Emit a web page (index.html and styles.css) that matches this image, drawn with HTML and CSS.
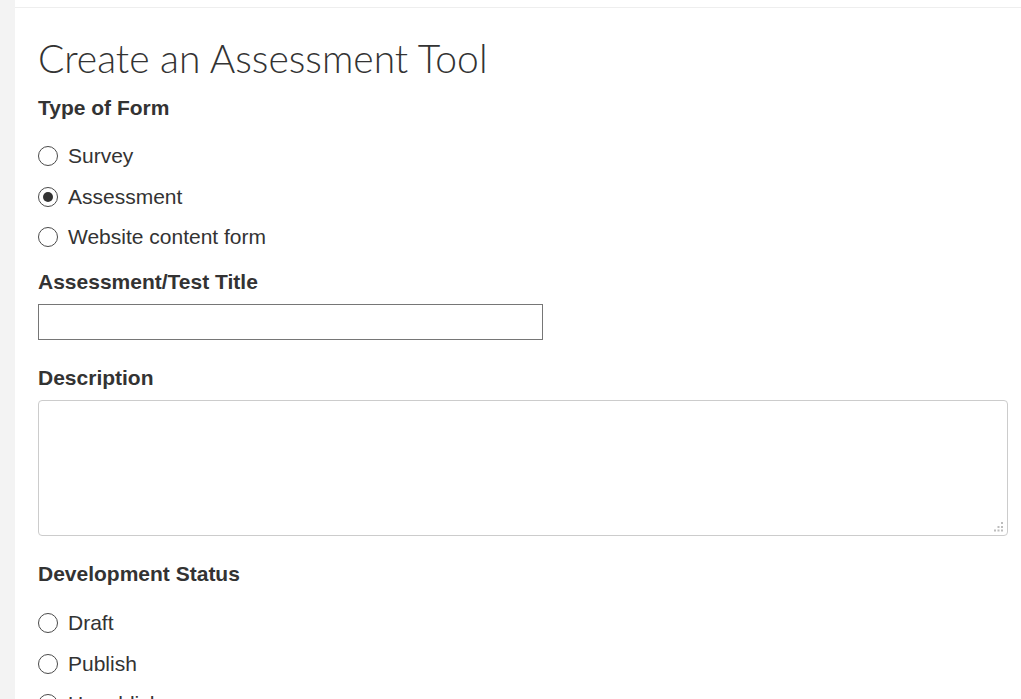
FILE: index.html
```html
<!DOCTYPE html>
<html>
<head>
<meta charset="utf-8">
<link rel="stylesheet" href="styles.css">
</head>
<body>
<div class="page">
  <aside class="gutter"></aside>
  <main class="panel">
    <h1 class="title">Create an Assessment Tool</h1>
    <div class="label label-first">Type of Form</div>
    <div class="radios">
      <label class="radio"><input type="radio" name="t"><span>Survey</span></label>
      <label class="radio"><input type="radio" name="t" checked><span>Assessment</span></label>
      <label class="radio"><input type="radio" name="t"><span>Website content form</span></label>
    </div>
    <div class="label label-title">Assessment/Test Title</div>
    <input class="text-input" type="text">
    <div class="label label-desc">Description</div>
    <div class="textarea-wrap">
      <textarea class="textarea"></textarea>
      <svg class="grip" width="11" height="11" viewBox="0 0 11 11">
        <rect x="8" y="0" width="2" height="2" fill="#bdbdbd"/>
        <rect x="4.5" y="4" width="2" height="2" fill="#bdbdbd"/>
        <rect x="8" y="4" width="2" height="2" fill="#bdbdbd"/>
        <rect x="1" y="7.5" width="2" height="2" fill="#bdbdbd"/>
        <rect x="4.5" y="7.5" width="2" height="2" fill="#bdbdbd"/>
        <rect x="8" y="7.5" width="2" height="2" fill="#bdbdbd"/>
      </svg>
    </div>
    <div class="label label-status">Development Status</div>
    <div class="radios radios-status">
      <label class="radio"><input type="radio" name="s"><span>Draft</span></label>
      <label class="radio"><input type="radio" name="s"><span>Publish</span></label>
      <label class="radio"><input type="radio" name="s"><span>Unpublish</span></label>
    </div>
  </main>
</div>
</body>
</html>
```

FILE: styles.css
```css
html, body {
  margin: 0;
  padding: 0;
  background: #ffffff;
  overflow: hidden;
}
.page {
  display: flex;
  min-height: 699px;
  font-family: "Liberation Sans", Arial, sans-serif;
  color: #333333;
}
.gutter {
  width: 15px;
  flex: none;
  background: #f3f3f3;
}
.panel {
  flex: 1;
  margin-top: 7px;
  border-top: 1px solid #eeeeee;
  padding: 0 13px 0 23px;
  display: flex;
  flex-direction: column;
  align-items: flex-start;
}
.title {
  margin: 28px 0 0 0;
  font-family: "Lato", "Open Sans", sans-serif;
  font-weight: 300;
  font-size: 39px;
  line-height: 44px;
  color: #333333;
}
.label {
  font-weight: bold;
  font-size: 21px;
  line-height: 24px;
  color: #333333;
}
.label-first { margin-top: 16px; }
.radios {
  display: flex;
  flex-direction: column;
  margin-top: 24px;
  gap: 16.5px;
}
.radios-status { margin-top: 25px; }
.radio {
  display: flex;
  align-items: center;
  gap: 10px;
  font-size: 21px;
  line-height: 24px;
}
.radio input {
  appearance: none;
  -webkit-appearance: none;
  margin: 0;
  width: 20px;
  height: 20px;
  border: 1.5px solid #4a4a4a;
  border-radius: 50%;
  box-sizing: border-box;
  background: #fff;
  display: grid;
  place-items: center;
}
.radio input:checked::after {
  content: "";
  width: 10px;
  height: 10px;
  border-radius: 50%;
  background: #333333;
}
.label-title { margin-top: 21px; }
.text-input {
  margin-top: 10px;
  width: 505px;
  height: 36px;
  box-sizing: border-box;
  border: 1px solid #767676;
  border-radius: 0;
  padding: 0 6px;
}
.label-desc { margin-top: 26px; }
.textarea-wrap {
  margin-top: 10px;
  width: 100%;
  position: relative;
  display: flex;
}
.textarea {
  width: 100%;
  height: 136px;
  box-sizing: border-box;
  border: 1px solid #cccccc;
  border-radius: 4px;
  resize: none;
  margin: 0;
}
.grip {
  position: absolute;
  right: 4px;
  bottom: 3px;
}
.label-status { margin-top: 26px; }
```
